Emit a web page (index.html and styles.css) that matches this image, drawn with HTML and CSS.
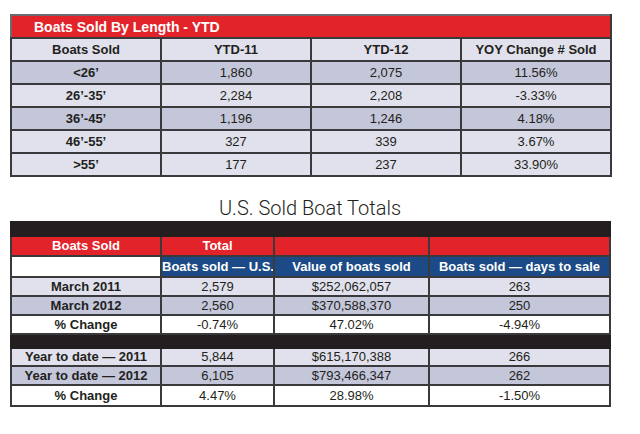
FILE: index.html
```html
<!DOCTYPE html>
<html lang="en">
<head>
<meta charset="utf-8">
<title>Boats Sold</title>
<link rel="stylesheet" href="styles.css">
</head>
<body>
<div class="page">
  <table class="grid length">
    <colgroup><col class="c150"><col class="c150"><col class="c150"><col class="c150"></colgroup>
    <tr class="title-row"><td colspan="4" class="title-cell">Boats Sold By Length - YTD</td></tr>
    <tr class="head light"><th class="b">Boats Sold</th><th class="b">YTD-11</th><th class="b">YTD-12</th><th class="b">YOY Change # Sold</th></tr>
    <tr class="dark"><td class="b">&lt;26’</td><td>1,860</td><td>2,075</td><td>11.56%</td></tr>
    <tr class="light"><td class="b">26’-35’</td><td>2,284</td><td>2,208</td><td>-3.33%</td></tr>
    <tr class="dark"><td class="b">36’-45’</td><td>1,196</td><td>1,246</td><td>4.18%</td></tr>
    <tr class="light"><td class="b">46’-55’</td><td>327</td><td>339</td><td>3.67%</td></tr>
    <tr class="light"><td class="b">&gt;55’</td><td>177</td><td>237</td><td>33.90%</td></tr>
  </table>

  <h2 class="heading">U.S. Sold Boat Totals</h2>

  <table class="grid totals">
    <colgroup><col class="c150"><col class="c113"><col class="c155"><col class="c181"></colgroup>
    <tr class="bar"><td colspan="4"></td></tr>
    <tr class="red"><th>Boats Sold</th><th>Total</th><th></th><th></th></tr>
    <tr class="blue"><th class="blank"></th><th>Boats sold — U.S.</th><th>Value of boats sold</th><th>Boats sold — days to sale</th></tr>
    <tr class="light r19"><td class="b">March 2011</td><td>2,579</td><td>$252,062,057</td><td>263</td></tr>
    <tr class="dark r19"><td class="b">March 2012</td><td>2,560</td><td>$370,588,370</td><td>250</td></tr>
    <tr class="white r19"><td class="b">% Change</td><td>-0.74%</td><td>47.02%</td><td>-4.94%</td></tr>
    <tr class="bar"><td colspan="4"></td></tr>
    <tr class="light r18"><td class="b">Year to date — 2011</td><td>5,844</td><td>$615,170,388</td><td>266</td></tr>
    <tr class="dark r19"><td class="b">Year to date — 2012</td><td>6,105</td><td>$793,466,347</td><td>262</td></tr>
    <tr class="white r21"><td class="b">% Change</td><td>4.47%</td><td>28.98%</td><td>-1.50%</td></tr>
  </table>
</div>
</body>
</html>
```

FILE: styles.css
```css
html, body {
  margin: 0;
  padding: 0;
  background: #ffffff;
}

.page {
  padding: 14px 0 0 10px;
  width: 600px;
}

.grid {
  border-collapse: collapse;
  table-layout: fixed;
  width: 600px;
  font-family: "Liberation Sans", Arial, sans-serif;
  font-size: 13px;
  color: #231f20;
}

.c150 { width: 150px; }
.c113 { width: 113px; }
.c155 { width: 155px; }
.c181 { width: 181px; }

.grid td, .grid th {
  border: 2px solid #3a3a3c;
  padding: 0;
  text-align: center;
  font-weight: normal;
  line-height: 16px;
  white-space: nowrap;
  overflow: hidden;
}

.grid .b { font-weight: bold; }

.length tr { height: 23px; }

.title-row { height: 26px; }
.grid .title-cell {
  background: #e3232a;
  color: #ffffff;
  font-weight: bold;
  font-size: 14px;
  text-align: left;
  padding-left: 22px;
  padding-top: 1px;
  border-top-color: #6a6a70;
  border-left-color: #6a6a70;
}

.light td, .light th { background: #e0e1ec; }
.dark td, .dark th { background: #c4c6da; }
.white td, .white th { background: #ffffff; }

.heading {
  margin: 18px 0 0 0;
  width: 600px;
  text-align: center;
  font-family: Roboto, "Liberation Sans", Arial, sans-serif;
  font-weight: 300;
  font-size: 20px;
  line-height: 26px;
  color: #231f20;
}

.bar { height: 14px; }
.grid .bar td {
  background: #231f20;
  border-color: #231f20;
}

.red { height: 20px; }
.grid .red th {
  background: #e3232a;
  color: #ffffff;
  font-weight: bold;
}

.blue { height: 21px; }
.grid .blue th {
  background: #1b4a86;
  color: #ffffff;
  font-weight: bold;
}
.grid .blue th.blank { background: #ffffff; }

.r18 { height: 18px; }
.r19 { height: 19px; }
.r21 { height: 21px; }
```
